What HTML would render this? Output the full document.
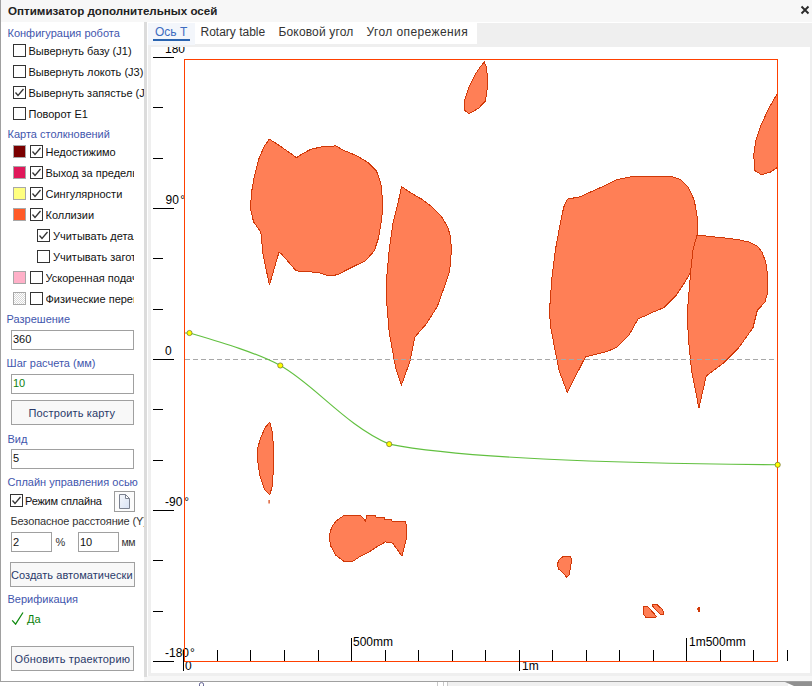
<!DOCTYPE html>
<html><head><meta charset="utf-8">
<style>
*{box-sizing:border-box;margin:0;padding:0}
html,body{width:812px;height:686px;overflow:hidden;background:#fff;font-family:"Liberation Sans",sans-serif;}
.a{position:absolute}
.t{position:absolute;white-space:nowrap}
.cb{position:absolute;width:13px;height:13px;border:1px solid #333;background:#fff}
.sw{position:absolute;width:13px;height:13px;border:1px solid #a8a8a8}
.inp{position:absolute;border:1px solid #a0a0a0;background:#fff}
.btn{position:absolute;border:1px solid #a0a0a0;background:#f8f8f8}
</style></head><body>
<div class="a" style="left:0;top:0;width:812px;height:681px;background:#f7f7f7"></div>
<div class="a" style="left:0;top:0;width:1px;height:682px;background:#a0a0a0"></div>
<div class="a" style="left:0;top:681px;width:812px;height:1px;background:#a0a0a0"></div>
<div class="a" style="left:448px;top:682px;width:340px;height:4px;background:#f0f0f0"></div>
<div class="a" style="left:437px;top:682px;width:1px;height:4px;background:#c8c8c8"></div>
<div class="a" style="left:443px;top:682px;width:1px;height:4px;background:#c8c8c8"></div>
<div class="a" style="left:447px;top:682px;width:1px;height:4px;background:#c8c8c8"></div>
<svg class="a" style="left:196px;top:682px" width="12" height="4"><path d="M3.5 4V2.2Q3.5 0.6 5.5 0.6Q7.5 0.6 7.5 2.2V4" fill="none" stroke="#55558a" stroke-width="0.9"/></svg>
<svg class="a" style="left:780px;top:682px" width="32" height="4"><path d="M5 0L32 0L32 4L14 4Z" fill="#909090"/></svg>
<div class="t" style="left:8px;top:3.98px;font-size:11.6px;line-height:14px;color:#222;font-weight:bold;">Оптимизатор дополнительных осей</div>
<svg class="a" style="left:800px;top:5px" width="10" height="10" viewBox="0 0 10 10"><path d="M1.5 1.5L8.5 8.5M8.5 1.5L1.5 8.5" stroke="#2a2a2a" stroke-width="1.9"/></svg>
<div class="a" style="left:1px;top:22px;width:811px;height:1px;background:#fff"></div>
<div class="a" style="left:147px;top:23px;width:665px;height:653px;background:#efefef"></div>
<div class="a" style="left:147px;top:22px;width:1px;height:654px;background:#fff"></div>
<div class="a" style="left:147px;top:23px;width:330px;height:21px;background:#fff"></div>
<div class="a" style="left:148px;top:23px;width:47px;height:22px;background:#f3f6fb"></div>
<div class="a" style="left:151px;top:47px;width:659px;height:626px;background:#fff"></div>
<div class="a" style="left:144px;top:22px;width:3px;height:655px;background:#dcdcdc"></div>
<div class="t" style="left:155px;top:25.34px;font-size:12px;line-height:15px;color:#3d6cc0;font-weight:normal;">Ось Т</div>
<div class="a" style="left:153px;top:39px;width:37px;height:2px;background:#2a64b0"></div>
<div class="t" style="left:200.5px;top:25.34px;font-size:12px;line-height:15px;color:#333;font-weight:normal;">Rotary table</div>
<div class="t" style="left:278.5px;top:25.34px;font-size:12px;line-height:15px;color:#333;font-weight:normal;letter-spacing:0.15px">Боковой угол</div>
<div class="t" style="left:366.5px;top:25.34px;font-size:12px;line-height:15px;color:#333;font-weight:normal;letter-spacing:0.4px">Угол опережения</div>
<div class="a" style="left:1px;top:23px;width:143px;height:658px;background:#fff;overflow:hidden">
<div class="t" style="left:6.5px;top:3.19px;font-size:11px;line-height:14px;color:#3f56ad;font-weight:normal;">Конфигурация робота</div>
<div class="cb" style="left:12px;top:21px"></div>
<div class="t" style="left:27.5px;top:21.19px;font-size:11px;line-height:14px;color:#111;font-weight:normal;">Вывернуть базу (J1)</div>
<div class="cb" style="left:12px;top:42px"></div>
<div class="t" style="left:27.5px;top:42.19px;font-size:11px;line-height:14px;color:#111;font-weight:normal;">Вывернуть локоть (J3)</div>
<div class="cb" style="left:12px;top:63px"><svg class="a" style="left:0;top:0" width="11" height="11"><path d="M1.5 5.5L4 8.5L9.5 2" stroke="#333" stroke-width="1.3" fill="none"/></svg></div>
<div class="t" style="left:27.5px;top:63.19px;font-size:11px;line-height:14px;color:#111;font-weight:normal;">Вывернуть запястье (J5)</div>
<div class="cb" style="left:12px;top:84px"></div>
<div class="t" style="left:27.5px;top:84.19px;font-size:11px;line-height:14px;color:#111;font-weight:normal;">Поворот E1</div>
<div class="t" style="left:6.5px;top:104.19px;font-size:11px;line-height:14px;color:#3f56ad;font-weight:normal;">Карта столкновений</div>
<div class="sw" style="left:12px;top:122px;background:#7a0000"></div>
<div class="cb" style="left:29px;top:122px"><svg class="a" style="left:0;top:0" width="11" height="11"><path d="M1.5 5.5L4 8.5L9.5 2" stroke="#333" stroke-width="1.3" fill="none"/></svg></div>
<div class="t" style="left:44.5px;top:122.19px;font-size:11px;line-height:14px;color:#111;font-weight:normal;overflow:hidden;width:88.5px;">Недостижимо</div>
<div class="sw" style="left:12px;top:143px;background:#e0185a"></div>
<div class="cb" style="left:29px;top:143px"><svg class="a" style="left:0;top:0" width="11" height="11"><path d="M1.5 5.5L4 8.5L9.5 2" stroke="#333" stroke-width="1.3" fill="none"/></svg></div>
<div class="t" style="left:44.5px;top:143.19px;font-size:11px;line-height:14px;color:#111;font-weight:normal;overflow:hidden;width:88.5px;">Выход за пределы</div>
<div class="sw" style="left:12px;top:164px;background:#ffff80"></div>
<div class="cb" style="left:29px;top:164px"><svg class="a" style="left:0;top:0" width="11" height="11"><path d="M1.5 5.5L4 8.5L9.5 2" stroke="#333" stroke-width="1.3" fill="none"/></svg></div>
<div class="t" style="left:44.5px;top:164.19px;font-size:11px;line-height:14px;color:#111;font-weight:normal;overflow:hidden;width:88.5px;">Сингулярности</div>
<div class="sw" style="left:12px;top:185px;background:#ff5a28"></div>
<div class="cb" style="left:29px;top:185px"><svg class="a" style="left:0;top:0" width="11" height="11"><path d="M1.5 5.5L4 8.5L9.5 2" stroke="#333" stroke-width="1.3" fill="none"/></svg></div>
<div class="t" style="left:44.5px;top:185.19px;font-size:11px;line-height:14px;color:#111;font-weight:normal;overflow:hidden;width:88.5px;">Коллизии</div>
<div class="cb" style="left:36px;top:206px"><svg class="a" style="left:0;top:0" width="11" height="11"><path d="M1.5 5.5L4 8.5L9.5 2" stroke="#333" stroke-width="1.3" fill="none"/></svg></div>
<div class="t" style="left:52px;top:206.19px;font-size:11px;line-height:14px;color:#111;font-weight:normal;overflow:hidden;width:81px;">Учитывать детали</div>
<div class="cb" style="left:36px;top:227px"></div>
<div class="t" style="left:52px;top:227.19px;font-size:11px;line-height:14px;color:#111;font-weight:normal;overflow:hidden;width:81px;">Учитывать заготовку</div>
<div class="sw" style="left:12px;top:248px;background:#ffb0c8"></div>
<div class="cb" style="left:29px;top:248px"></div>
<div class="t" style="left:44.5px;top:248.19px;font-size:11px;line-height:14px;color:#111;font-weight:normal;overflow:hidden;width:88.5px;">Ускоренная подача</div>
<div class="sw" style="left:12px;top:269px;background:repeating-conic-gradient(#d8d8d8 0 25%,#fff 0 50%) 0 0/2px 2px"></div>
<div class="cb" style="left:29px;top:269px"></div>
<div class="t" style="left:44.5px;top:269.19px;font-size:11px;line-height:14px;color:#111;font-weight:normal;overflow:hidden;width:88.5px;">Физические перемещения</div>
<div class="t" style="left:5.6px;top:289.19px;font-size:11px;line-height:14px;color:#3f56ad;font-weight:normal;">Разрешение</div>
<div class="inp" style="left:10px;top:307px;width:123px;height:20px"></div>
<div class="t" style="left:12px;top:309.19px;font-size:11px;line-height:14px;color:#111;font-weight:normal;">360</div>
<div class="t" style="left:5.6px;top:332.69px;font-size:11px;line-height:14px;color:#3f56ad;font-weight:normal;">Шаг расчета (мм)</div>
<div class="inp" style="left:10px;top:351px;width:123px;height:20px"></div>
<div class="t" style="left:12px;top:353.19px;font-size:11px;line-height:14px;color:#108010;font-weight:normal;">10</div>
<div class="btn" style="left:10px;top:377px;width:123px;height:25px"></div>
<div class="t" style="left:27.5px;top:383.19px;font-size:11px;line-height:14px;color:#2a3a6a;font-weight:normal;letter-spacing:0.15px;">Построить карту</div>
<div class="t" style="left:6.5px;top:408.69px;font-size:11px;line-height:14px;color:#3f56ad;font-weight:normal;">Вид</div>
<div class="inp" style="left:10px;top:426px;width:123px;height:20px"></div>
<div class="t" style="left:12px;top:428.19px;font-size:11px;line-height:14px;color:#111;font-weight:normal;">5</div>
<div class="t" style="left:6.5px;top:452.19px;font-size:11px;line-height:14px;color:#3f56ad;font-weight:normal;">Сплайн управления осью</div>
<div class="cb" style="left:9px;top:471px"><svg class="a" style="left:0;top:0" width="11" height="11"><path d="M1.5 5.5L4 8.5L9.5 2" stroke="#333" stroke-width="1.3" fill="none"/></svg></div>
<div class="t" style="left:24px;top:471.19px;font-size:11px;line-height:14px;color:#111;font-weight:normal;letter-spacing:-0.2px;">Режим сплайна</div>
<div class="btn" style="left:113px;top:468px;width:21px;height:21px;background:#fcfcfc;border-color:#9c9c9c"></div>
<svg class="a" style="left:118px;top:471px" width="11" height="15"><defs><linearGradient id="pg" x1="0" y1="0" x2="1" y2="1"><stop offset="0" stop-color="#f6f8fc"/><stop offset="1" stop-color="#d8e2f4"/></linearGradient></defs><path d="M0.5 0.5H6.5L10.5 4.5V14.5H0.5Z" fill="url(#pg)" stroke="#7c8290" stroke-width="1"/><path d="M6.5 0.5V4.5H10.5Z" fill="#fff" stroke="#7c8290" stroke-width="1"/></svg>
<div class="t" style="left:9.5px;top:491.19px;font-size:11px;line-height:14px;color:#333;font-weight:normal;letter-spacing:-0.12px;">Безопасное расстояние (Y)</div>
<div class="inp" style="left:10px;top:509px;width:41px;height:20px"></div>
<div class="t" style="left:12px;top:511.69px;font-size:11px;line-height:14px;color:#111;font-weight:normal;">2</div>
<div class="t" style="left:54.5px;top:511.69px;font-size:11px;line-height:14px;color:#333;font-weight:normal;">%</div>
<div class="inp" style="left:77px;top:509px;width:41px;height:20px"></div>
<div class="t" style="left:79px;top:511.69px;font-size:11px;line-height:14px;color:#111;font-weight:normal;">10</div>
<div class="t" style="left:120.5px;top:511.69px;font-size:11px;line-height:14px;color:#333;font-weight:normal;letter-spacing:-0.4px;font-size:10.5px;">мм</div>
<div class="btn" style="left:9px;top:539px;width:125px;height:25px"></div>
<div class="t" style="left:10px;top:545.19px;font-size:11px;line-height:14px;color:#2a3a6a;font-weight:normal;letter-spacing:0.05px;">Создать автоматически</div>
<div class="t" style="left:6.5px;top:569.19px;font-size:11px;line-height:14px;color:#3f56ad;font-weight:normal;">Верификация</div>
<svg class="a" style="left:10px;top:588px" width="14" height="14"><path d="M1.2 9.3L4.6 13.2L12 1.5" stroke="#0e8a0e" stroke-width="1.25" fill="none"/></svg>
<div class="t" style="left:26px;top:588.69px;font-size:11px;line-height:14px;color:#0a800a;font-weight:normal;">Да</div>
<div class="btn" style="left:10px;top:623px;width:123px;height:25px"></div>
<div class="t" style="left:13.5px;top:629.19px;font-size:11px;line-height:14px;color:#2a3a6a;font-weight:normal;letter-spacing:0.15px;">Обновить траекторию</div>
</div>
<div class="a" style="left:151px;top:47px;width:659px;height:626px;overflow:hidden">
<div class="t" style="left:14px;top:-4.66px;font-size:12px;line-height:15px;color:#000">180</div>
<div class="t" style="left:14.5px;top:146.34px;font-size:12px;line-height:15px;color:#000">90<span style="margin-left:1.5px">°</span></div>
<div class="t" style="left:14px;top:297.34px;font-size:12px;line-height:15px;color:#000">0</div>
<div class="t" style="left:14px;top:448.34px;font-size:12px;line-height:15px;color:#000">-90<span style="margin-left:2px">°</span></div>
<div class="t" style="left:14px;top:599.34px;font-size:12px;line-height:15px;color:#000">-180<span style="margin-left:1px">°</span></div>
<div class="t" style="left:34px;top:611.84px;font-size:12px;line-height:15px;color:#000">0</div>
<div class="t" style="left:371px;top:611.84px;font-size:12px;line-height:15px;color:#000">1m</div>
<div class="t" style="left:202px;top:588.34px;font-size:12px;line-height:15px;color:#000">500mm</div>
<div class="t" style="left:538px;top:587.84px;font-size:12px;line-height:15px;color:#000">1m500mm</div>
<svg class="a" style="left:0;top:0" width="659" height="626" viewBox="151 47 659 626"><path d="M484.4 62.1 L486.9 68.3 L487.4 87.7 L485.4 100.9 L478.8 108.1 L469.1 113.7 L464.5 110.1 L464.5 100.9 L467.6 90.7 L470.6 83.6 L475.2 74.4 L480.8 66.2Z" fill="#ff7f56" stroke="#d03808" stroke-width="1" shape-rendering="crispEdges"/><path d="M269.4 139.1 L278.9 145.2 L286.8 150.8 L296.5 157.6 L303.7 153.1 L310.9 149.2 L324.0 146.4 L332.8 146.4 L335.0 145.5 L343.7 150.3 L356.8 155.8 L367.7 162.3 L376.5 171.0 L380.8 183.1 L382.6 200.5 L381.9 218.0 L378.6 237.7 L374.3 250.8 L365.5 260.6 L350.2 268.2 L337.1 274.8 L328.4 275.9 L319.7 273.0 L308.7 271.5 L300.3 271.8 L295.8 270.4 L281.1 253.5 L278.9 252.4 L269.4 285.1 L263.1 254.6 L260.8 232.1 L253.6 221.9 L250.6 209.5 L251.3 193.7 L254.0 177.9 L258.5 159.8 L264.2 146.3Z" fill="#ff7f56" stroke="#d03808" stroke-width="1" shape-rendering="crispEdges"/><path d="M401.6 186.6 L411.2 193.1 L421.7 199.2 L431.3 206.2 L441.0 215.8 L447.9 227.2 L450.6 237.7 L451.4 250.0 L449.7 270.9 L444.4 286.6 L437.3 306.5 L426.1 324.1 L414.9 337.0 L410.1 361.0 L401.4 385.1 L395.6 367.4 L389.2 332.1 L386.5 300.0 L386.7 277.9 L389.4 248.2 L392.9 223.7 L398.1 202.7Z" fill="#ff7f56" stroke="#d03808" stroke-width="1" shape-rendering="crispEdges"/><path d="M567.2 199.2 L580.0 196.8 L591.6 191.5 L603.3 186.3 L616.1 179.8 L632.5 176.5 L671.0 176.5 L680.3 179.3 L688.4 187.5 L694.3 200.3 L697.1 216.6 L697.8 235.3 L696.6 249.3 L692.0 270.3 L685.0 282.0 L675.6 296.0 L664.0 307.6 L650.0 313.4 L646.4 315.5 L638.3 318.5 L634.6 325.1 L628.7 335.5 L616.8 347.3 L606.5 351.7 L585.8 356.9 L584.3 359.1 L567.3 392.4 L559.2 370.9 L554.8 348.8 L550.3 325.1 L549.6 308.9 L552.0 277.3 L555.5 249.3 L560.2 223.6 L563.7 207.3Z" fill="#ff7f56" stroke="#d03808" stroke-width="1" shape-rendering="crispEdges"/><path d="M697.0 235.0 L710.0 236.5 L725.0 238.0 L740.0 240.0 L749.4 242.2 L757.6 246.2 L762.0 252.0 L765.8 262.4 L767.8 277.0 L767.8 292.0 L765.0 302.0 L757.3 310.4 L752.9 327.9 L738.3 348.3 L723.7 362.9 L706.2 376.0 L698.9 408.0 L691.7 371.6 L688.2 336.6 L687.5 310.0 L688.7 295.8 L690.8 270.3 L693.0 250.0Z" fill="#ff7f56" stroke="#d03808" stroke-width="1" shape-rendering="crispEdges"/><path d="M777.3 93.6 L768.5 108.9 L760.5 126.5 L755.7 141.0 L753.7 155.4 L754.9 170.6 L761.3 174.7 L770.1 172.2 L777.3 167.4Z" fill="#ff7f56" stroke="#d03808" stroke-width="1" shape-rendering="crispEdges"/><path d="M269.8 422.2 L272.1 431.4 L273.6 446.7 L273.3 471.2 L272.1 486.5 L269.8 494.9 L264.5 489.5 L259.9 475.7 L257.6 460.5 L258.0 446.7 L261.4 436.0 L265.2 427.6Z" fill="#ff7f56" stroke="#d03808" stroke-width="1" shape-rendering="crispEdges"/><path d="M344.0 515.5 L360.6 515.5 L365.6 521.0 L366.6 515.5 L375.4 515.5 L376.0 517.3 L384.0 517.3 L384.7 519.5 L391.4 519.8 L392.0 521.3 L405.0 521.3 L406.8 525.9 L406.2 539.5 L401.9 556.1 L392.7 543.2 L385.3 541.9 L376.7 546.9 L369.3 551.8 L360.6 556.1 L353.3 561.0 L343.4 561.0 L336.0 555.5 L330.5 545.6 L329.2 535.8 L331.7 527.2 L336.0 521.0Z" fill="#ff7f56" stroke="#d03808" stroke-width="1" shape-rendering="crispEdges"/><path d="M565.4 556.1 L570.1 556.4 L571.0 557.8 L571.2 562.5 L570.4 567.7 L568.9 575.3 L566.9 577.4 L562.5 572.4 L558.4 568.9 L557.5 563.7 L559.3 559.3 L562.5 557.0Z" fill="#ff7f56" stroke="#d03808" stroke-width="1" shape-rendering="crispEdges"/><path d="M643.2 606.2 L647.5 606.2 L656.6 616.6 L655.7 617.6 L646.2 617.6 L643.2 614.0Z" fill="#ff7f56" stroke="#d03808" stroke-width="1" shape-rendering="crispEdges"/><path d="M652.2 604.3 L656.6 604.3 L662.6 609.7 L663.9 614.0 L660.4 614.4 L652.2 605.8Z" fill="#ff7f56" stroke="#d03808" stroke-width="1" shape-rendering="crispEdges"/><rect x="268.5" y="500" width="1.2" height="3.5" fill="#d83c08"/><rect x="698" y="606.5" width="2" height="5.5" fill="#d03808" shape-rendering="crispEdges"/><rect x="697" y="608" width="1" height="2" fill="#e05020" shape-rendering="crispEdges"/><line x1="185" y1="359.5" x2="777" y2="359.5" stroke="#a8a8a8" stroke-width="1" stroke-dasharray="5 3"/><rect x="184.5" y="59.5" width="593" height="602" fill="none" stroke="#ff4000" stroke-width="1"/><line x1="153" y1="57.5" x2="174" y2="57.5" stroke="#000" stroke-width="1"/><line x1="153" y1="107.5" x2="163" y2="107.5" stroke="#000" stroke-width="1"/><line x1="153" y1="158.5" x2="163" y2="158.5" stroke="#000" stroke-width="1"/><line x1="153" y1="208.5" x2="174" y2="208.5" stroke="#000" stroke-width="1"/><line x1="153" y1="258.5" x2="163" y2="258.5" stroke="#000" stroke-width="1"/><line x1="153" y1="309.5" x2="163" y2="309.5" stroke="#000" stroke-width="1"/><line x1="153" y1="359.5" x2="174" y2="359.5" stroke="#000" stroke-width="1"/><line x1="153" y1="409.5" x2="163" y2="409.5" stroke="#000" stroke-width="1"/><line x1="153" y1="460.5" x2="163" y2="460.5" stroke="#000" stroke-width="1"/><line x1="153" y1="510.5" x2="174" y2="510.5" stroke="#000" stroke-width="1"/><line x1="153" y1="560.5" x2="163" y2="560.5" stroke="#000" stroke-width="1"/><line x1="153" y1="611.5" x2="163" y2="611.5" stroke="#000" stroke-width="1"/><line x1="153" y1="661.5" x2="174" y2="661.5" stroke="#000" stroke-width="1"/><line x1="183.5" y1="650" x2="183.5" y2="671" stroke="#000" stroke-width="1"/><line x1="217.5" y1="650" x2="217.5" y2="661" stroke="#000" stroke-width="1"/><line x1="250.5" y1="650" x2="250.5" y2="661" stroke="#000" stroke-width="1"/><line x1="284.5" y1="650" x2="284.5" y2="661" stroke="#000" stroke-width="1"/><line x1="318.5" y1="650" x2="318.5" y2="661" stroke="#000" stroke-width="1"/><line x1="351.5" y1="638" x2="351.5" y2="661" stroke="#000" stroke-width="1"/><line x1="385.5" y1="650" x2="385.5" y2="661" stroke="#000" stroke-width="1"/><line x1="418.5" y1="650" x2="418.5" y2="661" stroke="#000" stroke-width="1"/><line x1="452.5" y1="650" x2="452.5" y2="661" stroke="#000" stroke-width="1"/><line x1="485.5" y1="650" x2="485.5" y2="661" stroke="#000" stroke-width="1"/><line x1="519.5" y1="650" x2="519.5" y2="671" stroke="#000" stroke-width="1"/><line x1="552.5" y1="650" x2="552.5" y2="661" stroke="#000" stroke-width="1"/><line x1="586.5" y1="650" x2="586.5" y2="661" stroke="#000" stroke-width="1"/><line x1="619.5" y1="650" x2="619.5" y2="661" stroke="#000" stroke-width="1"/><line x1="653.5" y1="650" x2="653.5" y2="661" stroke="#000" stroke-width="1"/><line x1="686.5" y1="638" x2="686.5" y2="661" stroke="#000" stroke-width="1"/><line x1="720.5" y1="650" x2="720.5" y2="661" stroke="#000" stroke-width="1"/><line x1="753.5" y1="650" x2="753.5" y2="661" stroke="#000" stroke-width="1"/><line x1="787.5" y1="650" x2="787.5" y2="661" stroke="#000" stroke-width="1"/><path d="M185 333 L189.5 333 C220 342 255 352 280.3 365.5 C315 385 345 425 389.2 444.1 C460 458 600 463 777.7 464.8" fill="none" stroke="#62c040" stroke-width="1.15"/><circle cx="189.5" cy="333" r="2.6" fill="#ffff00" stroke="#6a6a30" stroke-width="0.7"/><circle cx="280.3" cy="365.5" r="2.6" fill="#ffff00" stroke="#6a6a30" stroke-width="0.7"/><circle cx="389.2" cy="444.1" r="2.6" fill="#ffff00" stroke="#6a6a30" stroke-width="0.7"/><circle cx="777.7" cy="464.8" r="2.6" fill="#ffff00" stroke="#6a6a30" stroke-width="0.7"/></svg>
</div>
</body></html>
